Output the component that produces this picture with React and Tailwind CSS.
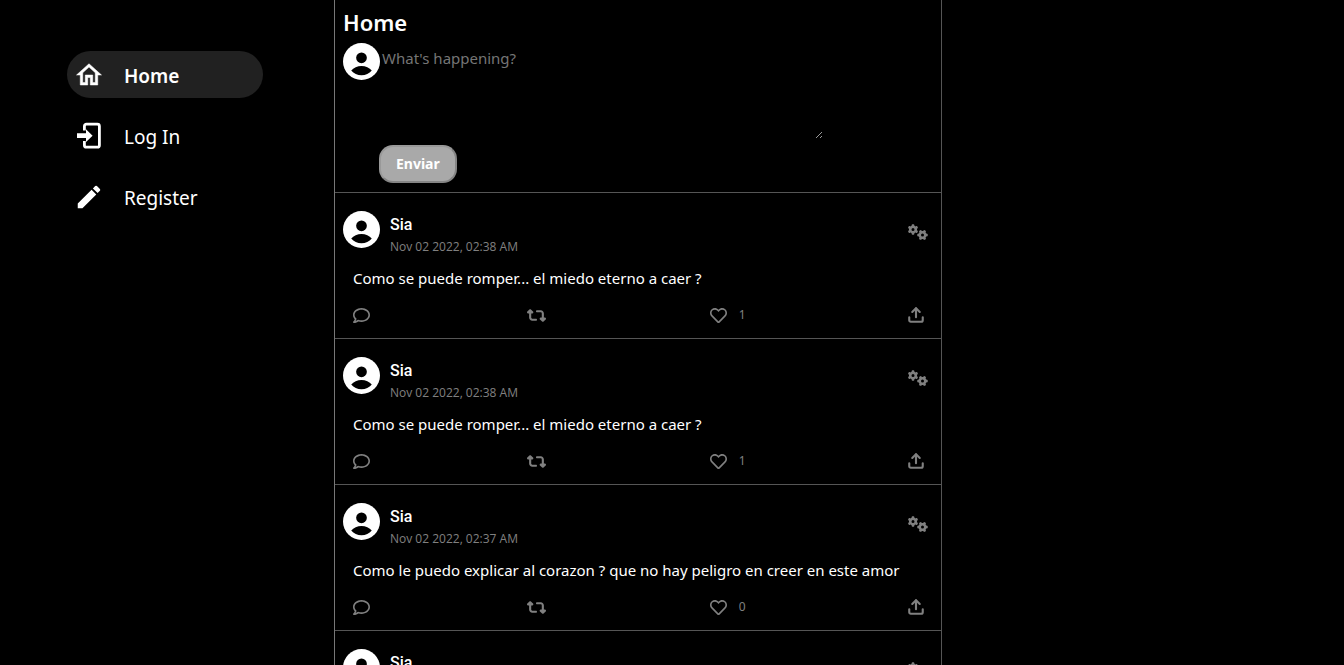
import { FaRegComment, FaRegHeart } from 'react-icons/fa';
import { FaGears, FaRetweet } from 'react-icons/fa6';
import { FiUpload } from 'react-icons/fi';
import { MdModeEdit } from 'react-icons/md';

const posts = [
  { id: 1, author: 'Sia', date: 'Nov 02 2022, 02:38 AM', text: 'Como se puede romper... el miedo eterno a caer ?', likes: 1 },
  { id: 2, author: 'Sia', date: 'Nov 02 2022, 02:38 AM', text: 'Como se puede romper... el miedo eterno a caer ?', likes: 1 },
  { id: 3, author: 'Sia', date: 'Nov 02 2022, 02:37 AM', text: 'Como le puedo explicar al corazon ? que no hay peligro en creer en este amor', likes: 0 },
  { id: 4, author: 'Sia', date: '', text: '', likes: 0 },
];

function HomeIcon({ className }) {
  return (
    <svg viewBox="0 0 24 24" className={className} fill="currentColor" stroke="currentColor" strokeWidth="0.4" aria-hidden="true">
      <path d="M12 5.69l5 4.5V18h-2v-6H9v6H7v-7.81l5-4.5M12 3L2 12h3v8h6v-6h2v6h6v-8h3L12 3z" />
    </svg>
  );
}

function LoginIcon({ className }) {
  return (
    <svg viewBox="0 0 30 30" className={className} fill="none" aria-hidden="true">
      <path d="M10.4 9.5V5.2a2 2 0 0 1 2-2h11a2 2 0 0 1 2 2v19a2 2 0 0 1-2 2h-11a2 2 0 0 1-2-2v-4.3" stroke="currentColor" strokeWidth="2.8" />
      <path d="M3 12.3h9V8.3l6.6 6.4-6.6 6.4v-4H3z" fill="currentColor" />
    </svg>
  );
}

function Avatar() {
  return (
    <svg viewBox="0 0 36 36" className="size-[37px] shrink-0" aria-hidden="true">
      <circle cx="18" cy="18" r="18" fill="#fff" />
      <circle cx="18" cy="14.4" r="5.2" fill="#000" />
      <path d="M8 26.8C10.2 24 14 22.3 18 22.3s7.8 1.7 10 4.5C25.6 29.8 22 31.4 18 31.4s-7.6-1.6-10-4.6z" fill="#000" />
    </svg>
  );
}

function NavItem({ icon: Icon, label, active }) {
  return (
    <a
      href="#"
      aria-current={active ? 'page' : undefined}
      className={`flex h-[47px] items-center gap-5 rounded-full px-[7px] text-[19px] ${active ? 'bg-[#212121] font-semibold' : ''}`}
    >
      <Icon className="size-[30px] shrink-0" />
      <span className="pt-1">{label}</span>
    </a>
  );
}

function Post({ author, date, text, likes }) {
  return (
    <article className="flex h-[146px] flex-col border-b border-[#555] px-2 pt-[18px]">
      <header className="flex">
        <Avatar />
        <div className="ml-2.5 flex-1">
          <h2 className="font-[Roboto] text-base leading-7 font-medium">{author}</h2>
          <time className="block h-4 font-['Open_Sans'] text-xs leading-4 text-[#808080]">{date}</time>
        </div>
        <button type="button" aria-label="Options" className="mr-[5px] flex h-[42px] items-center text-[#808080]">
          <FaGears className="size-5" />
        </button>
      </header>
      <p className="mt-2.5 h-[26px] px-2.5 text-[15px] leading-[26px]">{text}</p>
      <footer className="mt-3.5 grid h-5 grid-cols-[175fr_183fr_198fr_auto] items-center pr-2 pl-2.5 text-[#808080]">
        <button type="button" aria-label="Comment" className="justify-self-start">
          <FaRegComment className="size-[17px]" />
        </button>
        <button type="button" aria-label="Repost" className="justify-self-start">
          <FaRetweet className="size-[19px]" />
        </button>
        <button type="button" aria-label="Like" className="flex items-center gap-3 justify-self-start">
          <FaRegHeart className="size-[17px]" />
          <span className="text-xs">{likes}</span>
        </button>
        <button type="button" aria-label="Share">
          <FiUpload className="size-[18px]" strokeWidth="2.8" />
        </button>
      </footer>
    </article>
  );
}

export default function App() {
  return (
    <div className="grid h-screen grid-cols-[334fr_608fr_402fr] overflow-hidden bg-black font-['Noto_Sans',sans-serif] text-white">
      <nav aria-label="Main" className="flex flex-col gap-3.5 pt-[51px] pr-[71px] pl-[67px]">
        <NavItem icon={HomeIcon} label="Home" active />
        <NavItem icon={LoginIcon} label="Log In" />
        <NavItem icon={MdModeEdit} label="Register" />
      </nav>
      <main className="overflow-y-auto border-x border-[#555] border-l-[#777] [scrollbar-width:none]">
        <section className="border-b border-[#555] px-2 pt-1.5 pb-[9px]">
          <h1 className="h-[37px] text-[22px] leading-8 font-semibold">Home</h1>
          <form onSubmit={(e) => e.preventDefault()}>
            <div className="flex">
              <Avatar />
              <textarea
                aria-label="What's happening?"
                placeholder="What's happening?"
                className="h-24 w-3/4 resize bg-transparent px-0.5 pt-[3px] text-[15px] leading-6 outline-none placeholder:text-[#757575]"
              />
            </div>
            <button type="submit" className="mt-1.5 ml-9 block h-[38px] rounded-[14px] border-2 border-[#858585] border-t-[#999] border-l-[#999] bg-[#a9a9a9] px-[15px] text-sm font-bold">
              Enviar
            </button>
          </form>
        </section>
        {posts.map((post) => (
          <Post key={post.id} {...post} />
        ))}
      </main>
    </div>
  );
}
